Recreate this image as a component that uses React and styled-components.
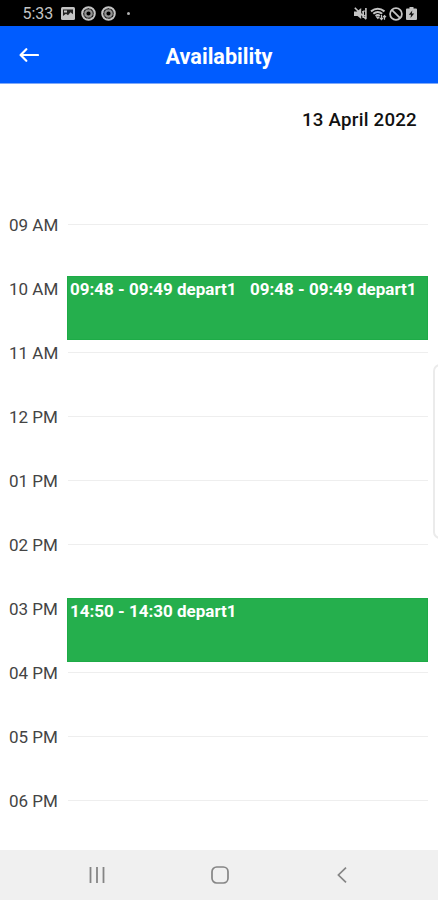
import React from 'react';
import styled, { createGlobalStyle } from 'styled-components';

const GlobalStyle = createGlobalStyle`
  * {
    box-sizing: border-box;
  }

  body {
    margin: 0;
    background: #fff;
    font-family: Roboto, "Liberation Sans", sans-serif;
  }
`;

const Screen = styled.div`
  position: relative;
  display: flex;
  flex-direction: column;
  height: 900px;
  overflow: hidden;
  background: #fff;
`;

const StatusBar = styled.div`
  display: flex;
  flex: none;
  justify-content: space-between;
  align-items: center;
  height: 26px;
  padding: 1px 21px 0 22.5px;
  background: #000;
  color: #c4c4c4;
`;

const StatusGroup = styled.div`
  display: flex;
  align-items: center;
  gap: ${props => props.$gap}px;

  svg {
    display: block;
  }
`;

const Clock = styled.span`
  width: 32px;
  margin-right: 1px;
  font-size: 16px;
  line-height: 24px;
  white-space: nowrap;
`;

const Dot = styled.span`
  width: 3px;
  height: 3px;
  margin-left: 5px;
  border-radius: 50%;
  background: #b0b0b0;
`;

const Header = styled.header`
  display: grid;
  flex: none;
  grid-template-columns: 58px 1fr 58px;
  align-items: center;
  height: 58px;
  border-bottom: 1px solid #7fa9f8;
  background: #005cff;
  color: #fff;
`;

const BackButton = styled.button`
  display: flex;
  justify-content: center;
  padding: 0;
  border: 0;
  background: none;
  color: inherit;
`;

const Title = styled.h1`
  margin: 5px 0 0;
  font-size: 21.6px;
  font-weight: 700;
  line-height: 28px;
  text-align: center;
`;

const DateLabel = styled.div`
  flex: none;
  height: 109px;
  padding: 24px 21px 0 0;
  color: #111;
  font-size: 18.7px;
  font-weight: 500;
  letter-spacing: 0.24px;
  line-height: 25px;
  text-align: right;
`;

const Timeline = styled.main`
  flex: 1;
  min-height: 0;
`;

const Slot = styled.div`
  position: relative;
  display: flex;
  align-items: center;
  height: 64px;
  padding: 0 10px 0 9px;
`;

const Hour = styled.span`
  width: 59px;
  color: #444;
  font-size: 17px;
  line-height: 22px;
  white-space: nowrap;
`;

const Line = styled.div`
  flex: 1;
  height: 1px;
  margin-bottom: 1px;
  background: #eee;
`;

const Booking = styled.div`
  position: absolute;
  top: ${props => props.$top}px;
  right: 10.5px;
  left: 67px;
  z-index: 1;
  display: grid;
  grid-template-columns: 180px 1fr;
  height: 64px;
  padding: 2px 0 0 2px;
  border: 1px solid #1eab47;
  background: #25af4d;
`;

const BookingText = styled.span`
  color: #fff;
  font-size: 17px;
  font-weight: 700;
  line-height: 20px;
  white-space: nowrap;
`;

const EdgePanel = styled.div`
  position: absolute;
  top: 364px;
  right: -10px;
  width: 15px;
  height: 175px;
  border: 2px solid #ebebeb;
  border-radius: 7px;
  background: #fff;
`;

const NavBar = styled.nav`
  display: grid;
  flex: none;
  grid-template-columns: repeat(3, 122.7px);
  justify-content: center;
  justify-items: center;
  align-items: center;
  height: 50px;
  padding-left: 1.5px;
  background: #f0f0f0;
  color: #858585;

  svg {
    display: block;
  }
`;

const slots = [
  { hour: '09 AM' },
  { hour: '10 AM', top: 19, bookings: ['09:48 - 09:49 depart1', '09:48 - 09:49 depart1'] },
  { hour: '11 AM' },
  { hour: '12 PM' },
  { hour: '01 PM' },
  { hour: '02 PM' },
  { hour: '03 PM', top: 21, bookings: ['14:50 - 14:30 depart1'] },
  { hour: '04 PM' },
  { hour: '05 PM' },
  { hour: '06 PM' }
];

const PictureIcon = () => (
  <svg width="14" height="13" viewBox="0 0 14 13">
    <rect width="14" height="13" rx="1.5" fill="currentColor" />
    <path d="M2 2.5h10v4.7L9.5 5.2 7 8.2 5 6.7 2 9z" fill="#222" />
    <path d="M3 3.5h3v2H3z" fill="currentColor" />
  </svg>
);

const RingIcon = () => (
  <svg width="15" height="15" viewBox="0 0 15 15" fill="none" stroke="currentColor">
    <circle cx="7.5" cy="7.5" r="6.3" strokeWidth="2" />
    <circle cx="7.5" cy="7.5" r="3.2" strokeWidth="2.2" opacity=".75" />
    <circle cx="7.5" cy="7.5" r="4.9" strokeWidth="1" strokeDasharray="2 1.85" opacity=".5" />
  </svg>
);

const MutedIcon = () => (
  <svg width="13" height="13" viewBox="0 0 13 13" fill="none" stroke="currentColor" strokeWidth="1.6">
    <path d="M0 4.5h3L7.2 1v11L3.5 9H0z" fill="currentColor" stroke="none" />
    <path d="M.8.8l11.4 11.4M9.2 4v7M11.9 1v11" />
    <path d="M8 5.2l2-1.5 2 1.5M8 8.4h4" strokeWidth="1" />
  </svg>
);

const WifiIcon = () => (
  <svg width="17" height="14" viewBox="0 0 17 14" fill="none" stroke="currentColor" strokeWidth="2">
    <path d="M1 4.4Q7.7-1 14.5 4.4M3.3 6.8q4.4-3.7 8.9 0M5.6 9q2.1-1.8 4.2 0" />
    <path d="M5.5 9.5l2.3 2.8L10 10z" fill="currentColor" stroke="none" />
    <path d="M11.5 8v4.4M9.8 10.8l1.7 1.8 1.5-1.8M14.5 12.8V8.6M13 10.2l1.5-1.6L16 10.2" strokeWidth="1.2" />
  </svg>
);

const BlockedIcon = () => (
  <svg width="14" height="14" viewBox="0 0 14 14" fill="none" stroke="currentColor" strokeWidth="1.8">
    <circle cx="7" cy="7" r="5.9" />
    <path d="M2.8 2.8l8.4 8.4" />
  </svg>
);

const BatteryIcon = () => (
  <svg width="11" height="13" viewBox="0 0 11 13">
    <path d="M3.5 0h4v1.5H10q1 0 1 1V12q0 1-1 1H1q-1 0-1-1V2.5q0-1 1-1h2.5z" fill="currentColor" />
    <path d="M6.3 3.4L2.8 7.7H5l-.5 3.4 3.7-4.6H5.8z" fill="#111" />
  </svg>
);

const BackArrow = () => (
  <svg width="20" height="14" viewBox="0 0 20 14" fill="none" stroke="currentColor" strokeWidth="2.2">
    <path d="M19 7H1.8M7.3 1.2L1.6 7l5.7 5.8" strokeLinecap="round" strokeLinejoin="round" />
  </svg>
);

const RecentsIcon = () => (
  <svg width="16" height="16" viewBox="0 0 16 16" stroke="currentColor" strokeWidth="1.8">
    <path d="M1.5 0v16M8 0v16M14.5 0v16" />
  </svg>
);

const HomeIcon = () => (
  <svg width="18" height="18" viewBox="0 0 18 18" fill="none" stroke="currentColor" strokeWidth="1.7">
    <rect x="1" y="1" width="16" height="16" rx="4.7" />
  </svg>
);

const NavBackIcon = () => (
  <svg width="10" height="16" viewBox="0 0 10 16" fill="none" stroke="currentColor" strokeWidth="1.7">
    <path d="M9 .6L1.4 8 9 15.4" />
  </svg>
);

const App = () => (
  <Screen>
    <GlobalStyle />
    <StatusBar>
      <StatusGroup $gap={5.5}>
        <Clock>5:33</Clock>
        <PictureIcon />
        <RingIcon />
        <RingIcon />
        <Dot />
      </StatusGroup>
      <StatusGroup $gap={3}>
        <MutedIcon />
        <StatusGroup $gap={2}>
          <WifiIcon />
          <BlockedIcon />
        </StatusGroup>
        <BatteryIcon />
      </StatusGroup>
    </StatusBar>
    <Header>
      <BackButton aria-label="Back">
        <BackArrow />
      </BackButton>
      <Title>Availability</Title>
    </Header>
    <DateLabel>13 April 2022</DateLabel>
    <Timeline>
      {slots.map(slot => (
        <Slot key={slot.hour}>
          <Hour>{slot.hour}</Hour>
          <Line />
          {slot.bookings ? (
            <Booking $top={slot.top}>
              {slot.bookings.map((booking, index) => (
                <BookingText key={index}>{booking}</BookingText>
              ))}
            </Booking>
          ) : null}
        </Slot>
      ))}
    </Timeline>
    <EdgePanel />
    <NavBar>
      <RecentsIcon />
      <HomeIcon />
      <NavBackIcon />
    </NavBar>
  </Screen>
);

export default App;
